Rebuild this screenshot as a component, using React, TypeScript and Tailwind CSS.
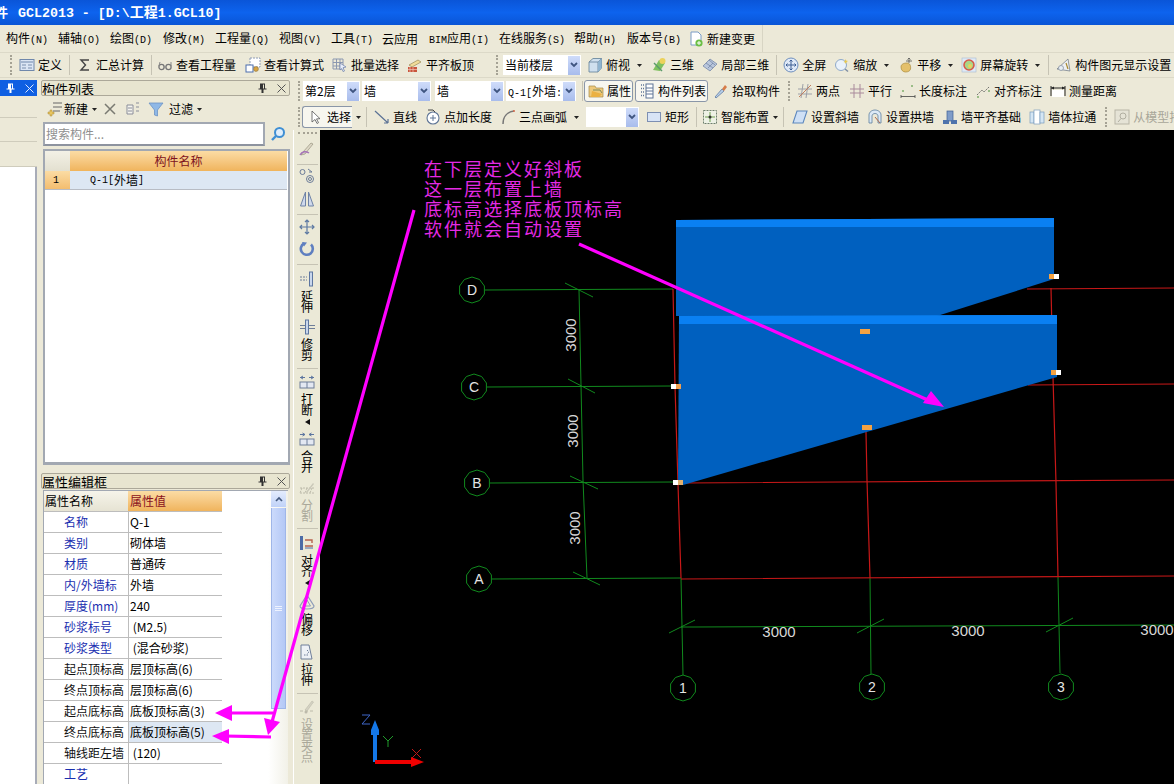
import type { ReactNode } from "react";

const CJK = "font-['Noto_Sans_CJK_SC','Liberation_Sans',sans-serif]";

// half width latin like the old bitmap font
const M = ({ children }: { children: ReactNode }) => (
  <span className="font-['Liberation_Mono',monospace] text-[10px]">{children}</span>
);

const Ico = ({ children }: { children: ReactNode }) => (
  <svg viewBox="0 0 16 16" className="h-4 w-4 shrink-0">
    {children}
  </svg>
);

const Caret = ({ cls = "ml-[7px]" }: { cls?: string }) => (
  <svg viewBox="0 0 5 3" className={`h-[3px] w-[5px] shrink-0 ${cls}`}>
    <path d="M0 0h5L2.5 3z" fill="#222" />
  </svg>
);

const Grip = ({ cls }: { cls: string }) => (
  <div className={`h-[20px] w-[2px] shrink-0 border-l-2 border-dotted border-[#a5a294] ${cls}`} />
);

const Sep = ({ cls }: { cls: string }) => <div className={`h-[20px] w-px shrink-0 bg-[#c6c3b4] ${cls}`} />;

const Tool = ({
  icon,
  label,
  cls,
  caret,
  grey,
}: {
  icon: ReactNode;
  label: string;
  cls: string;
  caret?: string;
  grey?: boolean;
}) => (
  <div className={`flex shrink-0 items-center ${cls} ${grey ? "text-[#a8a699]" : ""}`}>
    {icon}
    <span className="ml-[3px] whitespace-nowrap">{label}</span>
    {caret && <Caret cls={caret} />}
  </div>
);

const Combo = ({ label, cls }: { label: ReactNode; cls: string }) => (
  <div className={`flex h-[20px] shrink-0 items-center bg-white ${cls}`}>
    <span className="ml-[2px] flex-1 overflow-hidden whitespace-nowrap">{label}</span>
    <div className="mr-[1px] flex h-[19px] w-[12px] shrink-0 items-center justify-center bg-gradient-to-b from-[#cfdcfa] to-[#a8bcec]">
      <svg viewBox="0 0 8 6" className="h-[6px] w-[8px]">
        <path d="M1 1l3 3 3-3" fill="none" stroke="#3f5580" strokeWidth="1.8" />
      </svg>
    </div>
  </div>
);

const PinX = ({ light }: { light?: boolean }) => {
  const c = light ? "#fff" : "#333";
  return (
    <>
      <svg viewBox="0 0 9 10" className="h-[10px] w-[9px] shrink-0">
        <path d="M2 .5h5v5h1.5v1h-3V10h-2V6.5h-3v-1H2z M5 1.5v4h1v-4z" fill={c} fillRule="evenodd" />
      </svg>
      <svg viewBox="0 0 9 9" className="ml-[10px] h-[9px] w-[9px] shrink-0">
        <path d="M.5.5l8 8M8.5.5l-8 8" stroke={light ? "#dfe9ff" : "#555"} strokeWidth="1" />
      </svg>
    </>
  );
};

/* toolbar icons */
const icons = {
  define: (
    <Ico>
      <rect x="1" y="2.5" width="14" height="11" fill="#dbe5f4" stroke="#6f87ab" />
      <path d="M2 5h12" stroke="#6f87ab" />
      <path d="M3 8h4M3 11h4M9 8h4M9 11h4" stroke="#7b8fae" />
    </Ico>
  ),
  sigma: (
    <Ico>
      <path d="M12 3H4l4.5 5L4 13h8" fill="none" stroke="#444" strokeWidth="1.4" />
    </Ico>
  ),
  glasses: (
    <Ico>
      <circle cx="4.5" cy="10" r="2.6" fill="none" stroke="#777" strokeWidth="1.3" />
      <circle cx="11.5" cy="10" r="2.6" fill="none" stroke="#777" strokeWidth="1.3" />
      <path d="M7 10h2M2 9l1-4M14 9V5" stroke="#888" fill="none" />
    </Ico>
  ),
  calc: (
    <Ico>
      <rect x="5" y="1" width="10" height="9" fill="#fff" stroke="#8e9bb5" strokeDasharray="2 1" />
      <rect x="1" y="8" width="7" height="7" fill="#fff" stroke="#4d6fae" />
      <circle cx="11" cy="12" r="2.4" fill="#d9a441" stroke="#8a7240" strokeWidth=".6" />
    </Ico>
  ),
  batch: (
    <Ico>
      <path d="M1 2h10v10H1zM1 5.5h10M1 9h10M4.5 2v10M8 2v10" fill="none" stroke="#8b98b0" />
      <path d="M8 6l6 4-3 .7L12.500 14l-1.400.600-1.400-3L8 13z" fill="#e8eefb" stroke="#6a7da6" strokeWidth=".7" />
    </Ico>
  ),
  flush: (
    <Ico>
      <path d="M2 8l9-5 3 2-9 5z" fill="#f0dc9a" stroke="#9a8a55" strokeWidth=".7" />
      <rect x="1" y="10" width="9" height="5" fill="#c9553c" />
      <path d="M3 10v5M6 10v5M1 12.500h9" stroke="#f2c4b8" strokeWidth=".7" />
    </Ico>
  ),
  doc: (
    <Ico>
      <path d="M3 1h7l3 3v10H3z" fill="#fff" stroke="#7a9cc6" />
      <circle cx="11" cy="12" r="3.600" fill="#6bbf45" />
      <path d="M9 12h4M11 10v4" stroke="#fff" />
    </Ico>
  ),
  cube: (
    <Ico>
      <path d="M2 5l4-3.500h8.500V11L11 15H2z" fill="#cfe0ee" stroke="#5f7f97" strokeWidth=".8" />
      <path d="M2 5h9v10M11 5l3.500-3.500" fill="none" stroke="#5f7f97" strokeWidth=".8" />
      <path d="M11 5l3.500-3.500V11L11 15z" fill="#8fb4cf" />
    </Ico>
  ),
  three: (
    <Ico>
      <path d="M2 13l6-10 6 3-5 8z" fill="#7fc05e" />
      <circle cx="11.500" cy="4" r="3" fill="#ecd25a" />
      <path d="M3 6l8 8" stroke="#5a9a6b" strokeWidth="1.400" />
    </Ico>
  ),
  local: (
    <Ico>
      <path d="M1 9l7-7 7 5-7 7z" fill="#b9c6dc" stroke="#6d80a0" strokeWidth=".7" />
      <path d="M4 6l7 5M7 3l6 5M6 11l5-5" stroke="#6d80a0" strokeWidth=".7" />
    </Ico>
  ),
  full: (
    <Ico>
      <circle cx="8" cy="8" r="7" fill="#dfe9f7" stroke="#6f8fbd" />
      <path d="M8 3v10M3 8h10M6.500 4.500L8 3l1.500 1.500M6.500 11.500L8 13l1.500-1.500M4.500 6.500L3 8l1.500 1.500M11.500 6.500L13 8l-1.500 1.500" fill="none" stroke="#3d5e94" />
    </Ico>
  ),
  zoom: (
    <Ico>
      <circle cx="7" cy="8" r="5.500" fill="#eaf2fb" stroke="#8fa9c9" />
      <path d="M11 12l3 2.500" stroke="#7d8da3" strokeWidth="1.500" />
      <path d="M11 2l1 1.500L14 4l-1.500 1L12 7l-1-1.500L9.500 5 11 4z" fill="#e6c84f" />
    </Ico>
  ),
  pan: (
    <Ico>
      <path d="M3 10c0-3 3-4 6-4 3 0 4 3 3.500 6-.3 2-2.500 3-5 3-2.500 0-4.500-2-4.500-5z" fill="#e4c06a" stroke="#a98b3e" strokeWidth=".7" />
      <path d="M11 1v5M9.500 2.500L11 1l1.500 1.500M8 4h6" fill="none" stroke="#555" strokeWidth=".8" />
    </Ico>
  ),
  spin: (
    <Ico>
      <rect x="1" y="1" width="14" height="14" fill="#dfeaf6" stroke="#a8bad0" strokeWidth=".6" />
      <circle cx="8" cy="8" r="5" fill="#a9d68a" stroke="#d65a4a" strokeWidth="1.600" />
      <circle cx="9" cy="9" r="2" fill="#ecd25a" />
    </Ico>
  ),
  display: (
    <Ico>
      <path d="M1 12L12 2l2 12z" fill="#eef0f2" stroke="#77808c" strokeWidth=".8" />
      <circle cx="5" cy="11" r="2.500" fill="#e8eef4" stroke="#8a94a2" strokeWidth=".8" />
      <path d="M10 6l2 6" stroke="#a8892f" strokeWidth="1.200" />
    </Ico>
  ),
  prop: (
    <Ico>
      <path d="M1 3h6l1 2h7v9H1z" fill="#eec97a" stroke="#a58a4c" strokeWidth=".7" />
      <path d="M4 8l10 3-3 3H3z" fill="#ebb142" />
      <path d="M5 7h7l2 3" stroke="#7d8b5d" fill="none" />
    </Ico>
  ),
  list: (
    <Ico>
      <path d="M2 2h3M2 5.500h3M2 9h3M2 12.500h3" stroke="#5e7497" strokeDasharray="1 1" strokeWidth="1.400" />
      <rect x="7" y="1" width="7" height="14" fill="#fff" stroke="#5e7497" />
      <path d="M7 5h7M7 8h7M7 11h7" stroke="#5e7497" />
    </Ico>
  ),
  pick: (
    <Ico>
      <path d="M2 14l7-8 2 2-8 7z" fill="#b8cfe8" stroke="#5d7aa3" strokeWidth=".8" />
      <path d="M9 6l3-4 2 2-3 4z" fill="#d67c49" />
    </Ico>
  ),
  twop: (
    <Ico>
      <path d="M1 6h14M1 11h14M6 1l-2 14M11 1L9 15" stroke="#9da0a8" />
      <path d="M2 14L14 2" stroke="#c07d5d" />
    </Ico>
  ),
  para: (
    <Ico>
      <path d="M1 6h14M1 10h14M5 1v14M11 1v14" stroke="#a98a9b" />
    </Ico>
  ),
  lenDim: (
    <Ico>
      <circle cx="3" cy="8" r="1" fill="#7fae6d" />
      <circle cx="12" cy="3" r="1" fill="#7fae6d" />
      <path d="M1 12v3M15 12v3M1 13.500h14" stroke="#444" strokeWidth=".8" />
    </Ico>
  ),
  alDim: (
    <Ico>
      <path d="M2 12l5-5 2 2 5-5" stroke="#555" strokeWidth=".8" fill="none" strokeDasharray="2 1" />
      <circle cx="3" cy="14" r="1" fill="#7fae6d" />
      <circle cx="14" cy="8" r="1" fill="#7fae6d" />
    </Ico>
  ),
  measure: (
    <Ico>
      <path d="M1 3v10M15 3v10" stroke="#222" />
      <path d="M1 5h14" stroke="#222" />
      <path d="M1 5l3-1.500v3zM15 5l-3-1.500v3z" fill="#222" />
      <rect x="2" y="7" width="12" height="7" fill="#fff" />
    </Ico>
  ),
  arrow: (
    <Ico>
      <path d="M5 2v11l3-2.500 2 4 1.500-.8-2-3.800 3.500-.2z" fill="#fff" stroke="#555" strokeWidth=".8" />
    </Ico>
  ),
  line: (
    <Ico>
      <path d="M1 2l13 12M14 14v-4M14 14h-4" stroke="#5b7295" strokeWidth="1.200" fill="none" />
    </Ico>
  ),
  ptLen: (
    <Ico>
      <circle cx="8" cy="9" r="6" fill="#fff" stroke="#5f7697" strokeWidth="1.100" />
      <path d="M8 6v6M5 9h6" stroke="#5f7697" />
      <path d="M3 1h5l2 2" stroke="#444" fill="none" />
    </Ico>
  ),
  arc: (
    <Ico>
      <path d="M3 15C3 8 7 3 14 2" fill="none" stroke="#777" strokeWidth="1.500" />
      <circle cx="14" cy="2" r="1" fill="#d46a4c" />
    </Ico>
  ),
  rect: (
    <Ico>
      <rect x="1.500" y="3.500" width="13" height="9" fill="#d8e4f6" stroke="#7d8fb2" />
    </Ico>
  ),
  smart: (
    <Ico>
      <rect x="1.500" y="1.500" width="13" height="13" fill="#eef2e6" stroke="#6d7f6d" strokeDasharray="2 1" />
      <path d="M8 3v10M3 8h10" stroke="#6fa04f" />
      <circle cx="8" cy="8" r="1.500" fill="#333" />
    </Ico>
  ),
  slant: (
    <Ico>
      <path d="M5 2h10l-4 12H1z" fill="#cfe0f5" stroke="#5c87bd" strokeWidth="1.100" />
    </Ico>
  ),
  archW: (
    <Ico>
      <path d="M2 14V6c0-3 3-5 6-5s6 2 6 5v8h-3V7c0-1.500-1.400-2.500-3-2.500S5 5.500 5 7v7z" fill="#dce9f6" stroke="#5d7f9f" strokeWidth=".8" />
      <path d="M8 8l5 6" stroke="#b06b4a" />
    </Ico>
  ),
  base: (
    <Ico>
      <rect x="5" y="2" width="6" height="10" fill="#7f9cc8" stroke="#3e5f93" strokeWidth=".7" />
      <rect x="1" y="11" width="6" height="4" fill="#4e73ac" />
      <rect x="9" y="11" width="6" height="4" fill="#4e73ac" />
    </Ico>
  ),
  thru: (
    <Ico>
      <rect x="1" y="3" width="4" height="11" fill="#d5e6f4" stroke="#7a9bbd" strokeWidth=".7" />
      <rect x="5" y="1" width="6" height="14" fill="#fff" stroke="#7a9bbd" strokeWidth=".7" />
      <rect x="11" y="3" width="4" height="11" fill="#d5e6f4" stroke="#7a9bbd" strokeWidth=".7" />
    </Ico>
  ),
  model: (
    <Ico>
      <rect x="1" y="1" width="14" height="14" fill="#e5e3d6" stroke="#b7b5a6" />
      <circle cx="9" cy="7" r="3" fill="none" stroke="#b1afa1" />
      <path d="M7 9.500L4 13" stroke="#b1afa1" />
    </Ico>
  ),
};

/* vertical bar icons */
const vIcons = {
  paint: (
    <Ico>
      <path d="M2 14l4-1 8-10-2-1-8 9z" fill="#ddd8c6" stroke="#8c8672" strokeWidth=".6" />
      <path d="M1 14c2-4 6-4 9-2" fill="none" stroke="#a673b8" strokeWidth="1.500" />
    </Ico>
  ),
  link: (
    <Ico>
      <circle cx="3.500" cy="4" r="2.500" fill="none" stroke="#6c7c98" />
      <circle cx="11" cy="11" r="3.500" fill="none" stroke="#6c7c98" />
      <circle cx="11" cy="11" r="1.500" fill="none" stroke="#6c7c98" />
      <path d="M9 1l4 3M13 4h-3" stroke="#6c7c98" fill="none" />
    </Ico>
  ),
  mirror: (
    <Ico>
      <path d="M6.500 1L1.500 15h5zM9.500 1l5 14h-5z" fill="#cfd9ec" stroke="#6f83a6" />
    </Ico>
  ),
  move: (
    <Ico>
      <path d="M8 1v14M1 8h14M6 3l2-2 2 2M6 13l2 2 2-2M3 6L1 8l2 2M13 6l2 2-2 2" fill="none" stroke="#5e7aa3" strokeWidth="1.200" />
    </Ico>
  ),
  rotate: (
    <Ico>
      <path d="M12 3.500A6 6 0 1 1 5 2.500" fill="none" stroke="#5f7fc0" strokeWidth="2.600" />
      <path d="M3 1l5 .5-3 4z" fill="#5f7fc0" />
    </Ico>
  ),
  extend: (
    <Ico>
      <path d="M1 6h7M1 9h7" stroke="#6e7e99" strokeDasharray="2 1" />
      <rect x="10.500" y="1" width="3" height="14" fill="#c9d7ec" stroke="#5d76a0" />
    </Ico>
  ),
  trim: (
    <Ico>
      <path d="M1 6.500h6M1 9.500h6M10 6.500h6M10 9.500h6" stroke="#6e7e99" />
      <rect x="6.500" y="1" width="3" height="14" fill="#c9d7ec" stroke="#5d76a0" />
    </Ico>
  ),
  brk: (
    <Ico>
      <path d="M1 3.500h5M4 2l-2.500 1.500L4 5M15 3.500h-5M12 2l2.500 1.500L12 5" fill="none" stroke="#5d76a0" />
      <rect x="1" y="8" width="14" height="6" fill="#e3e8f2" stroke="#6e7e99" />
      <path d="M8 8v6" stroke="#6e7e99" />
    </Ico>
  ),
  merge: (
    <Ico>
      <path d="M1 3.500h5M3.500 2L6 3.500 3.500 5M15 3.500h-5M12.500 2L10 3.500 12.500 5" fill="none" stroke="#5d76a0" />
      <rect x="1" y="8" width="14" height="6" fill="#e3e8f2" stroke="#6e7e99" />
      <path d="M8 8v6" stroke="#6e7e99" />
    </Ico>
  ),
  split: (
    <Ico>
      <path d="M1 8h14M1 13h14M3 8l-2 5M8 8l-2 5M13 8l-2 5" stroke="#bcbaaa" strokeDasharray="2 1" />
      <path d="M7 12l7-9 1 1-7 9z" fill="#c9c7b8" />
    </Ico>
  ),
  align: (
    <Ico>
      <rect x="1" y="1" width="3" height="14" fill="#4c6ca6" />
      <path d="M6 5h7v3M6 11h8" fill="none" stroke="#b8624e" strokeWidth="1.400" />
      <path d="M6 13h8" stroke="#4c6ca6" />
    </Ico>
  ),
  offset: (
    <Ico>
      <path d="M8 1l7 11c0 2-3 3-7 3s-7-1-7-3z" fill="none" stroke="#8d9cb8" strokeWidth="1.200" />
      <path d="M8 6l3.500 6h-7z" fill="none" stroke="#8d9cb8" />
    </Ico>
  ),
  stretch: (
    <Ico>
      <path d="M2 1h8l3 14H2z" fill="#eef1f6" stroke="#6e7e99" />
      <path d="M8 6l2 2-2 2M5 11h5" fill="none" stroke="#6e7e99" strokeDasharray="1.500 1" />
    </Ico>
  ),
  grab: (
    <Ico>
      <path d="M1 12h14" stroke="#bcbaaa" strokeDasharray="3 2" />
      <path d="M6 11l7-9 1.500 1L8 12z" fill="#d4d2c3" stroke="#bcbaaa" strokeWidth=".6" />
      <circle cx="7" cy="13" r="1.500" fill="#bcbaaa" />
    </Ico>
  ),
};

const VItem = ({
  icon,
  label,
  cls,
  grey,
  arrow,
}: {
  icon: ReactNode;
  label?: string;
  cls: string;
  grey?: boolean;
  arrow?: boolean;
}) => (
  <div className={`flex shrink-0 flex-col items-center ${cls} ${grey ? "text-[#aaa89a]" : "text-black"}`}>
    {icon}
    {label && <div className="mt-[3px] w-[12px] break-all text-center text-[12px] leading-[11px]">{label}</div>}
    {arrow && (
      <svg viewBox="0 0 5 6" className="mt-[4px] h-[6px] w-[5px]">
        <path d="M5 0v6L0 3z" fill="#111" />
      </svg>
    )}
  </div>
);

const VSep = ({ cls }: { cls: string }) => <div className={`h-px w-[21px] shrink-0 bg-[#c6c3b4] ${cls}`} />;

const VerticalBar = () => (
  <div className="flex w-[27px] shrink-0 flex-col items-center border-l border-white bg-[#ebe9d7]">
    <div className="mt-[2px] h-[2px] w-[19px] shrink-0 border-t-2 border-dotted border-[#a5a294]" />
    <VItem icon={vIcons.paint} cls="mt-[7px]" />
    <VSep cls="mt-[7px]" />
    <VItem icon={vIcons.link} cls="mt-[3px]" />
    <VItem icon={vIcons.mirror} cls="mt-[7px]" />
    <VSep cls="mt-[7px]" />
    <VItem icon={vIcons.move} cls="mt-[4px]" />
    <VItem icon={vIcons.rotate} cls="mt-[6px]" />
    <VSep cls="mt-[7px]" />
    <VItem icon={vIcons.extend} label="延伸" cls="mt-[6px]" />
    <VItem icon={vIcons.trim} label="修剪" cls="mt-[7px]" />
    <VSep cls="mt-[8px]" />
    <VItem icon={vIcons.brk} label="打断" arrow cls="mt-[5px]" />
    <VItem icon={vIcons.merge} label="合并" cls="mt-[6px]" />
    <VItem icon={vIcons.split} label="分割" grey cls="mt-[8px]" />
    <VSep cls="mt-[7px]" />
    <VItem icon={vIcons.align} label="对齐" arrow cls="mt-[6px]" />
    <VItem icon={vIcons.offset} label="偏移" cls="mt-[8px]" />
    <VItem icon={vIcons.stretch} label="拉伸" cls="mt-[9px]" />
    <VSep cls="mt-[8px]" />
    <VItem icon={vIcons.grab} label="设置夹点" grey cls="mt-[5px]" />
  </div>
);

const menus: { t: string; k?: string; cls: string }[] = [
  { t: "构件", k: "(N)", cls: "w-[52px]" },
  { t: "辅轴", k: "(O)", cls: "w-[52px]" },
  { t: "绘图", k: "(D)", cls: "w-[53px]" },
  { t: "修改", k: "(M)", cls: "w-[52px]" },
  { t: "工程量", k: "(Q)", cls: "w-[64px]" },
  { t: "视图", k: "(V)", cls: "w-[52px]" },
  { t: "工具", k: "(T)", cls: "w-[51px]" },
  { t: "云应用", cls: "w-[47px]" },
  { t: "BIM应用", k: "(I)", cls: "w-[70px]" },
  { t: "在线服务", k: "(S)", cls: "w-[75px]" },
  { t: "帮助", k: "(H)", cls: "w-[53px]" },
  { t: "版本号", k: "(B)", cls: "w-[61px]" },
];

const props: { n: string; v: string; blue?: boolean; hi?: boolean }[] = [
  { n: "名称", v: "Q-1", blue: true },
  { n: "类别", v: "砌体墙", blue: true },
  { n: "材质", v: "普通砖", blue: true },
  { n: "内/外墙标", v: "外墙", blue: true },
  { n: "厚度(mm)", v: "240", blue: true },
  { n: "砂浆标号", v: " (M2.5)", blue: true },
  { n: "砂浆类型", v: " (混合砂浆)", blue: true },
  { n: "起点顶标高", v: "层顶标高(6)" },
  { n: "终点顶标高", v: "层顶标高(6)" },
  { n: "起点底标高", v: "底板顶标高(3)" },
  { n: "终点底标高", v: "底板顶标高(5)", hi: true },
  { n: "轴线距左墙", v: " (120)" },
  { n: "工艺", v: "", blue: true },
];

const PropertyTable = () => (
  <div className="mx-[2px] mt-[1px] flex min-h-0 flex-1 border-l border-t border-[#a2a8b2] bg-white">
    <div className="w-[178px] shrink-0">
      <div className="flex h-[21px] border-b border-[#bdbdbd]">
        <div className="flex w-[84px] items-center bg-gradient-to-b from-[#f6f4ea] to-[#e6e3d3] pl-[1px]">属性名称</div>
        <div className="flex flex-1 items-center bg-gradient-to-b from-[#fbdca4] to-[#f0b45c] pl-[2px] text-[#8a1020]">属性值</div>
      </div>
      {props.map((p) => (
        <div key={p.n} className="flex h-[21px] border-b border-[#bdbdbd]">
          <div className={`flex w-[84px] items-center pl-[20px] whitespace-nowrap ${p.blue ? "text-[#1a2fb0]" : "text-[#111]"}`}>{p.n}</div>
          <div className={`flex flex-1 items-center whitespace-pre border-l border-[#bdbdbd] pl-[1px] ${p.hi ? "bg-[#dde7f3]" : ""}`}>{p.v}</div>
        </div>
      ))}
    </div>
    <div className="flex flex-1 justify-end bg-gradient-to-r from-white from-[70%] to-[#f2f1e8]">
      <div className="mr-[2px] flex h-[218px] w-[15px] flex-col">
        <div className="flex h-[16px] items-center justify-center bg-gradient-to-b from-[#e4ecfd] to-[#c0d2f8]">
          <svg viewBox="0 0 8 6" className="h-[6px] w-[8px]">
            <path d="M1 5l3-3 3 3" fill="none" stroke="#43597f" strokeWidth="1.700" />
          </svg>
        </div>
        <div className="mt-[1px] flex flex-1 flex-col items-center justify-center border-x border-b border-[#9fb6e8] bg-gradient-to-r from-[#cbdafb] to-[#b4c8f6]">
          <div className="flex flex-col gap-[1px]">
            <div className="h-px w-[7px] bg-[#eef3ff]" />
            <div className="h-px w-[7px] bg-[#eef3ff]" />
            <div className="h-px w-[7px] bg-[#eef3ff]" />
          </div>
        </div>
      </div>
    </div>
  </div>
);

const octagon = (cx: number, cy: number, r: number) =>
  Array.from({ length: 10 }, (_, i) => {
    const a = (i / 10) * Math.PI * 2 - Math.PI / 2;
    return `${(cx + r * Math.cos(a)).toFixed(1)},${(cy + r * Math.sin(a)).toFixed(1)}`;
  }).join(" ");

const green = "#118a1e";
const red = "#c81818";

const bubbles = [
  { t: "D", x: 472, y: 290 },
  { t: "C", x: 474, y: 387 },
  { t: "B", x: 477, y: 483 },
  { t: "A", x: 479, y: 579 },
  { t: "1", x: 683, y: 688 },
  { t: "2", x: 872, y: 687 },
  { t: "3", x: 1061, y: 687 },
];

const Canvas = () => (
  <div className="min-w-0 flex-1 bg-black">
    <svg viewBox="320 130 854 654" className="block h-[654px] w-[854px]">
      <g fill="none" stroke={green} strokeWidth="1">
        <path d="M485 290L673 289M487 387L671 386M490 483L673 482M492 579L681 578" />
        <path d="M579 290L583 480L587 578" />
        <path d="M565 283L593 297M568 379L595 393M570 476L598 489M573 572L600 585" />
        <path d="M681 578L683 675M870 578L871 674M1058 577L1060 673" />
        <path d="M693 627L1174 625M681 627H693" />
        <path d="M669 633L695 620M857 633L884 619M1046 632L1073 618" />
      </g>
      <g fill="none" stroke={red} strokeWidth="1.200">
        <path d="M673 289L675 386L678 484L681 578" />
        <path d="M866 432L867 480L870 578" />
        <path d="M1051 288L1053 377L1056 483L1058 577" />
        <path d="M1027 289L1174 288M1028 385L1174 384M683 483L1174 480M681 579L1174 576" />
      </g>

      {/* upper and lower sloped walls sit over the grid lines */}
      <path d="M676 220L1054 218V279L937 316H676z" fill="#0060bf" />
      <path d="M676 220L1054 218V227H676z" fill="#0a80f2" />
      <path d="M679 316L1057 315V377L683 485H678z" fill="#0060bf" />
      <path d="M679 316L1057 315V324H679z" fill="#0a80f2" />

      {bubbles.map((b) => (
        <g key={b.t}>
          <polygon points={octagon(b.x, b.y, 13)} fill="none" stroke={green} strokeWidth="1" />
          <text x={b.x} y={b.y + 5} textAnchor="middle" fill="#e4e4e4" className="font-['Liberation_Sans',sans-serif] text-[14px]">
            {b.t}
          </text>
        </g>
      ))}

      {[
        [779, 637],
        [968, 636],
        [1157, 635],
      ].map(([x, y]) => (
        <text key={x} x={x} y={y} textAnchor="middle" fill="#d8d8d8" className="font-['Liberation_Sans',sans-serif] text-[15px]">
          3000
        </text>
      ))}
      {[
        [576, 335],
        [578, 431],
        [580, 528],
      ].map(([x, y]) => (
        <text key={y} x={x} y={y} textAnchor="middle" transform={`rotate(-90 ${x} ${y})`} fill="#d8d8d8" className="font-['Liberation_Sans',sans-serif] text-[15px]">
          3000
        </text>
      ))}

      {/* grips on the wall ends */}
      <g>
        <rect x="860" y="329" width="10" height="5" fill="#f5a242" />
        <rect x="862" y="425" width="10" height="5" fill="#f5a242" />
        <rect x="1049" y="274" width="5" height="5" fill="#f5a242" />
        <rect x="1054" y="274" width="5" height="5" fill="#fff" />
        <rect x="1051" y="370" width="5" height="5" fill="#f5a242" />
        <rect x="1056" y="370" width="5" height="5" fill="#fff" />
        <rect x="671" y="384" width="5" height="5" fill="#fff" />
        <rect x="676" y="384" width="5" height="5" fill="#f0a050" />
        <rect x="673" y="480" width="5" height="5" fill="#fff" />
        <rect x="678" y="480" width="5" height="5" fill="#e0b070" />
      </g>

      {/* ucs */}
      <path d="M375 762V732" stroke="#1478e8" strokeWidth="4" />
      <path d="M375 720l4 10v5h-8v-5z" fill="#1478e8" />
      <path d="M375 762H412" stroke="#f00000" strokeWidth="4" />
      <path d="M424 762l-13-5v10z" fill="#f00000" />
      <path d="M362 715h8l-8 9h8" fill="none" stroke="#3f66c8" strokeWidth="1" />
      <path d="M383 736l5 5 5-5M388 741v6" fill="none" stroke="#1f9a2a" strokeWidth="1" />
      <path d="M412 749l9 9M421 749l-9 9" fill="none" stroke="#c01818" strokeWidth="1" />

      <g fill="#e52ae5" className={`${CJK} text-[18px]`} letterSpacing="2">
        <text x="424" y="176">在下层定义好斜板</text>
        <text x="424" y="196">这一层布置上墙</text>
        <text x="424" y="216">底标高选择底板顶标高</text>
        <text x="424" y="236">软件就会自动设置</text>
      </g>
    </svg>
  </div>
);

// the hand drawn arrows cross panels and canvas, so they lie over the whole page
const Annotations = () => (
  <svg viewBox="0 0 1174 784" className="pointer-events-none absolute inset-0 h-[784px] w-[1174px]">
    <g stroke="#ff00ff" strokeWidth="3.200" fill="#ff00ff">
      <path d="M414 210L272 722" fill="none" />
      <path d="M579 244L930 401" fill="none" />
      <path d="M273 713H228" fill="none" />
      <path d="M271 737L224 736" fill="none" />
    </g>
    <g fill="#ff00ff">
      <path d="M268 735L264 718 L280 722z" />
      <path d="M944 407L923 403L931 391z" />
      <path d="M215 713L232 705V721z" />
      <path d="M212 736L229 729V744z" />
    </g>
  </svg>
);

export default function App() {
  return (
    <div className={`relative flex h-[784px] w-[1174px] flex-col overflow-hidden bg-[#ece9d8] text-[12px] text-black ${CJK}`}>
      {/* title bar */}
      <div className="flex h-[25px] shrink-0 items-center bg-gradient-to-b from-[#0a55d8] via-[#0d63ee] to-[#0a55d6] font-bold text-white">
        <div className="-ml-[5px] whitespace-nowrap leading-[25px]">
          <span className="text-[13px]">件</span>
          <span className="ml-[10px] font-['Liberation_Mono',monospace] text-[13.300px]">GCL2013 - [D:\</span>
          <span className="text-[14px]">工程</span>
          <span className="font-['Liberation_Mono',monospace] text-[13.300px]">1.GCL10]</span>
        </div>
      </div>

      {/* menu */}
      <div className="flex h-[27px] shrink-0 items-center">
        <div className="flex h-full w-[763px] shrink-0 items-center border-r border-[#d8d5c4] pl-[6px]">
          {menus.map((m) => (
            <div key={m.t} className={`shrink-0 whitespace-nowrap ${m.cls}`}>
              {m.t === "BIM应用" ? (
                <>
                  <M>BIM</M>应用
                </>
              ) : (
                m.t
              )}
              {m.k && <M>{m.k}</M>}
            </div>
          ))}
          <Tool icon={icons.doc} label="新建变更" cls="ml-[0px]" />
        </div>
      </div>

      {/* toolbar 1 */}
      <div className="flex h-[26px] shrink-0 items-center border-y border-[#dcd9c8]">
        <Grip cls="ml-[10px]" />
        <Tool icon={icons.define} label="定义" cls="ml-[7px]" />
        <Sep cls="ml-[7px]" />
        <Tool icon={icons.sigma} label="汇总计算" cls="ml-[7px]" />
        <Sep cls="ml-[7px]" />
        <Tool icon={icons.glasses} label="查看工程量" cls="ml-[5px]" />
        <Tool icon={icons.calc} label="查看计算式" cls="ml-[9px]" />
        <Tool icon={icons.batch} label="批量选择" cls="ml-[8px]" />
        <Tool icon={icons.flush} label="平齐板顶" cls="ml-[8px]" />
        <Grip cls="ml-[22px]" />
        <Combo label="当前楼层" cls="ml-[5px] w-[78px]" />
        <Tool icon={icons.cube} label="俯视" caret="ml-[7px]" cls="ml-[6px]" />
        <Tool icon={icons.three} label="三维" cls="ml-[9px]" />
        <Tool icon={icons.local} label="局部三维" cls="ml-[8px]" />
        <Sep cls="ml-[7px]" />
        <Tool icon={icons.full} label="全屏" cls="ml-[6px]" />
        <Tool icon={icons.zoom} label="缩放" caret="ml-[7px]" cls="ml-[8px]" />
        <Tool icon={icons.pan} label="平移" caret="ml-[7px]" cls="ml-[9px]" />
        <Tool icon={icons.spin} label="屏幕旋转" caret="ml-[7px]" cls="ml-[8px]" />
        <Sep cls="ml-[8px]" />
        <Tool icon={icons.display} label="构件图元显示设置" cls="ml-[7px]" />
      </div>

      <div className="flex min-h-0 flex-1">
        {/* left docks */}
        <div className="flex w-[293px] shrink-0 pt-[2px]">
          <div className="flex w-[37px] shrink-0 flex-col">
            <div className="flex h-[16px] shrink-0 items-center justify-end bg-[#0f5fe2] pr-[3px]">
              <PinX light />
            </div>
            <div className="h-[22px] shrink-0 border-b border-[#cfccbc]" />
            <div className="h-[24px] shrink-0 border-b border-[#cfccbc]" />
            <div className="h-[25px] shrink-0 border-b border-[#cfccbc]" />
            <div className="flex-1 border-r-2 border-[#a8acb8] bg-white" />
          </div>

          <div className="ml-[4px] flex w-[249px] shrink-0 flex-col">
            <div className="flex h-[16px] shrink-0 items-center overflow-hidden rounded-[2px] border border-[#aca899] bg-[#e8e5d0] pr-[3px]">
              <span className="flex-1 text-[13px] leading-none">构件列表</span>
              <PinX />
            </div>
            <div className="flex h-[26px] shrink-0 items-center">
              <svg viewBox="0 0 16 16" className="ml-[6px] h-4 w-4 shrink-0">
                <path d="M6 2h9M6 6h9M6 10h7" stroke="#666" strokeWidth="1.200" />
                <path d="M3 9h2v2h2v2H5v2H3v-2H1v-2h2z" fill="#e7c45e" stroke="#a88a36" strokeWidth=".5" />
              </svg>
              <span className="ml-[1px]">新建</span>
              <Caret cls="ml-[4px]" />
              <svg viewBox="0 0 12 12" className="ml-[7px] h-[12px] w-[12px] shrink-0">
                <path d="M1 1l10 10M11 1L1 11" stroke="#7a7a72" strokeWidth="1.500" />
              </svg>
              <svg viewBox="0 0 16 16" className="ml-[9px] h-4 w-4 shrink-0">
                <path d="M2 4h6v9H2zM11 2h3M11 6h3M11 10h3" fill="#f5f4ee" stroke="#8a8d99" />
                <path d="M3 7h4M3 10h4" stroke="#8a8d99" />
              </svg>
              <svg viewBox="0 0 16 16" className="ml-[7px] h-4 w-4 shrink-0">
                <path d="M1 2h14L9.500 9v6l-3-1V9z" fill="#8fb8e6" stroke="#6c93c4" strokeWidth=".8" />
              </svg>
              <span className="ml-[5px]">过滤</span>
              <Caret cls="ml-[4px]" />
            </div>
            <div className="flex h-[24px] shrink-0 items-center pl-[2px]">
              <div className="flex h-[24px] w-[222px] items-center border-2 border-[#a2a8b2] border-b-[#8d939f] bg-white pl-[1px] text-[#8f8f8f]">
                搜索构件...
              </div>
              <svg viewBox="0 0 16 16" className="ml-[5px] h-4 w-4 shrink-0">
                <circle cx="9.500" cy="6.500" r="4.500" fill="#dfeefc" stroke="#3f8fd4" strokeWidth="2" />
                <path d="M6 10l-4 4" stroke="#3f8fd4" strokeWidth="2.400" />
              </svg>
            </div>
            <div className="ml-[2px] mt-[3px] flex h-[316px] shrink-0 flex-col border-2 border-b-[3px] border-[#a2a8b2] bg-white pr-[1px]">
              <div className="flex h-[20px] shrink-0">
                <div className="w-[25px] bg-gradient-to-b from-[#f3f1e6] to-[#e3e0d0]" />
                <div className="flex flex-1 items-center justify-center bg-gradient-to-b from-[#fbdca4] to-[#f0b45c] text-[#7d1220]">构件名称</div>
              </div>
              <div className="flex h-[19px] shrink-0 border-b border-[#b8bcc4]">
                <div className="flex w-[25px] items-center pl-[8px] bg-gradient-to-b from-[#fbdca4] to-[#f3bd6e]">
                  <M>1</M>
                </div>
                <div className="flex flex-1 items-center bg-[#dde7f3] pl-[20px]">
                  <M>Q-1[</M>外墙<M>]</M>
                </div>
              </div>
            </div>
            <div className="mt-[8px] flex h-[16px] shrink-0 items-center overflow-hidden rounded-[2px] border border-[#aca899] bg-[#e8e5d0] pr-[3px]">
              <span className="flex-1 text-[13px] leading-none">属性编辑框</span>
              <PinX />
            </div>
            <PropertyTable />
          </div>
        </div>

        {/* main column */}
        <div className="flex min-w-0 flex-1 flex-col">
          <div className="flex h-[26px] shrink-0 items-center">
            <Grip cls="ml-[5px]" />
            <Combo label="第2层" cls="ml-[3px] w-[57px]" />
            <Combo label="墙" cls="ml-[2px] w-[69px]" />
            <Combo label="墙" cls="ml-[4px] w-[69px]" />
            <Combo
              label={
                <>
                  <M>Q-1[</M>外墙<M>:</M>
                </>
              }
              cls="ml-[2px] w-[70px]"
            />
            <Sep cls="ml-[6px]" />
            <div className="ml-[1px] flex h-[22px] w-[49px] shrink-0 items-center rounded-[3px] border border-[#8a96a8] bg-[#f7f6ef] pl-[3px]">
              {icons.prop}
              <span className="ml-[3px] whitespace-nowrap">属性</span>
            </div>
            <div className="ml-[2px] flex h-[22px] w-[73px] shrink-0 items-center rounded-[3px] border border-[#8a96a8] bg-[#f7f6ef] pl-[3px]">
              {icons.list}
              <span className="ml-[3px] whitespace-nowrap">构件列表</span>
            </div>
            <Tool icon={icons.pick} label="拾取构件" cls="ml-[5px]" />
            <Grip cls="ml-[8px]" />
            <Tool icon={icons.twop} label="两点" cls="ml-[7px]" />
            <Tool icon={icons.para} label="平行" cls="ml-[9px]" />
            <Tool icon={icons.lenDim} label="长度标注" cls="ml-[8px]" />
            <Tool icon={icons.alDim} label="对齐标注" cls="ml-[8px]" />
            <Tool icon={icons.measure} label="测量距离" cls="ml-[8px]" />
          </div>
          <div className="flex h-[26px] shrink-0 items-center">
            <Grip cls="ml-[5px]" />
            <div className="ml-[2px] flex h-[22px] w-[50px] shrink-0 items-center rounded-l-[3px] border-y border-l border-[#8a96a8] bg-[#f7f6ef] pl-[4px]">
              {icons.arrow}
              <span className="ml-[4px] whitespace-nowrap">选择</span>
            </div>
            <Caret cls="ml-[4px]" />
            <Sep cls="ml-[5px]" />
            <Tool icon={icons.line} label="直线" cls="ml-[7px]" />
            <Tool icon={icons.ptLen} label="点加长度" cls="ml-[8px]" />
            <Tool icon={icons.arc} label="三点画弧" caret="ml-[7px]" cls="ml-[8px]" />
            <Combo label="" cls="ml-[7px] w-[53px]" />
            <Tool icon={icons.rect} label="矩形" cls="ml-[7px]" />
            <Sep cls="ml-[7px]" />
            <Tool icon={icons.smart} label="智能布置" caret="ml-[4px]" cls="ml-[5px]" />
            <Sep cls="ml-[5px]" />
            <Tool icon={icons.slant} label="设置斜墙" cls="ml-[8px]" />
            <Tool icon={icons.archW} label="设置拱墙" cls="ml-[8px]" />
            <Tool icon={icons.base} label="墙平齐基础" cls="ml-[8px]" />
            <Tool icon={icons.thru} label="墙体拉通" cls="ml-[8px]" />
            <Grip cls="ml-[9px]" />
            <Tool icon={icons.model} label="从模型拾取" grey cls="ml-[7px]" />
          </div>
          <div className="flex min-h-0 flex-1">
            <VerticalBar />
            <Canvas />
          </div>
        </div>
      </div>

      <Annotations />
    </div>
  );
}
